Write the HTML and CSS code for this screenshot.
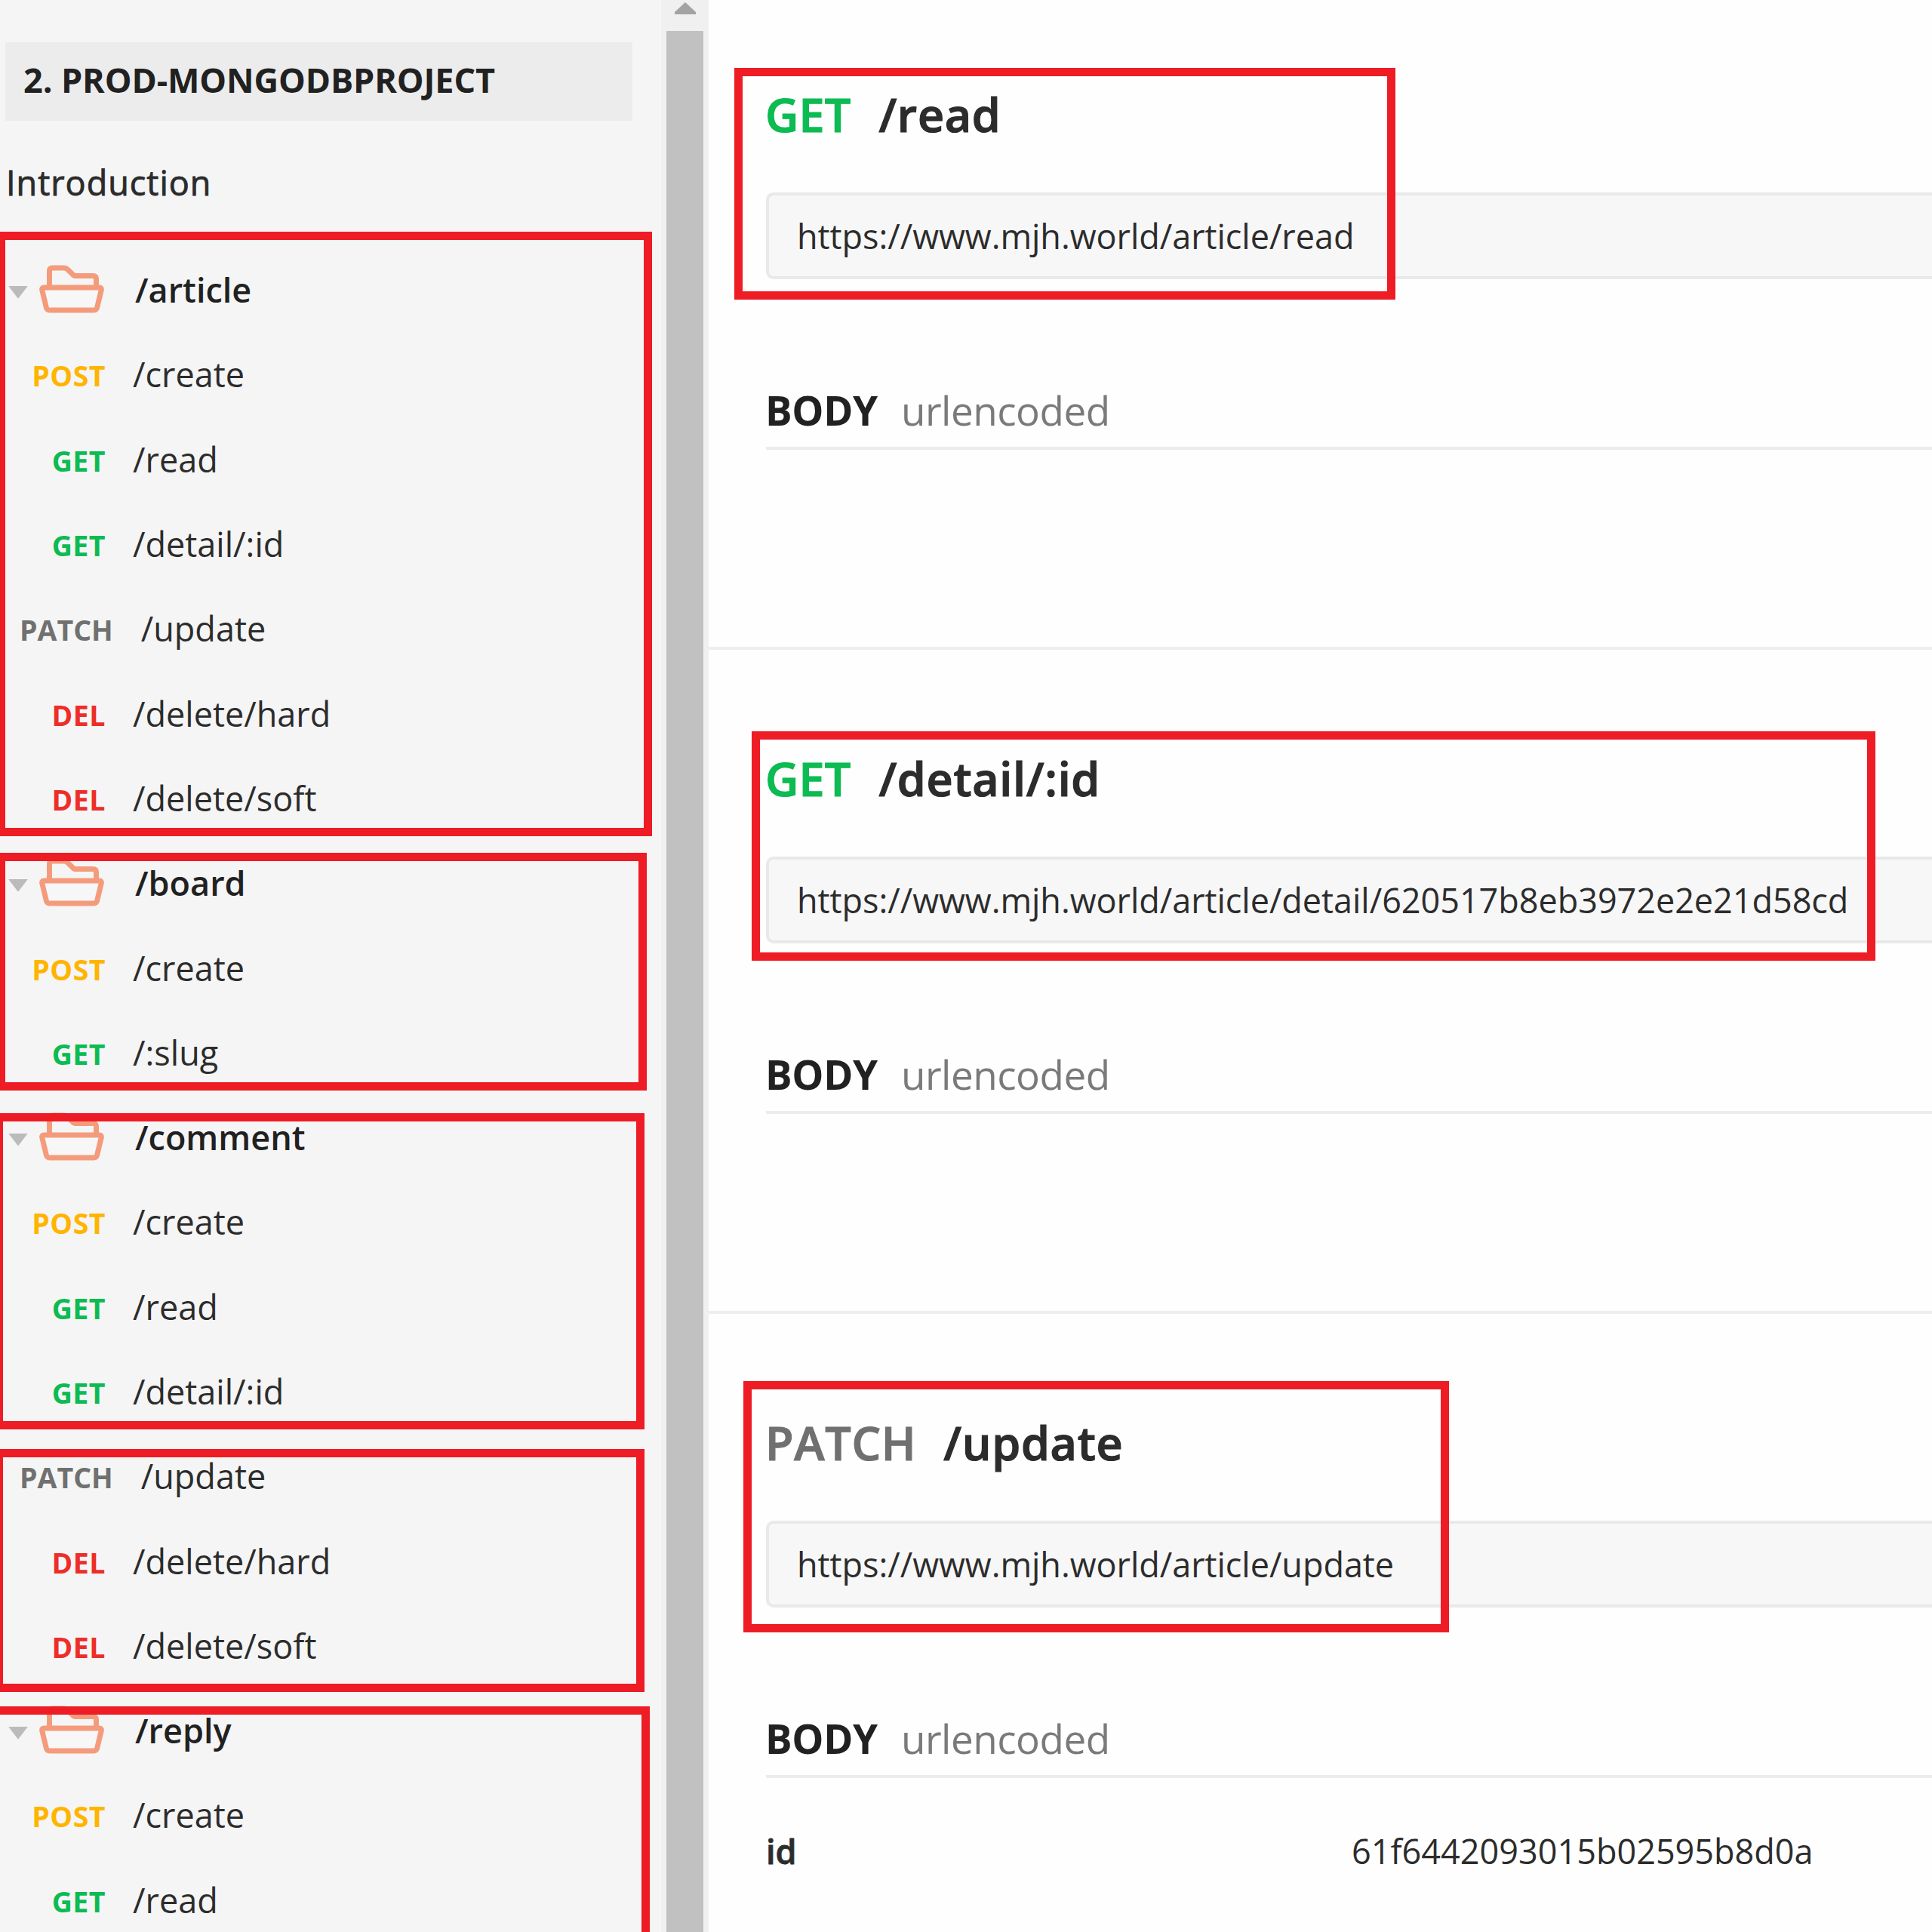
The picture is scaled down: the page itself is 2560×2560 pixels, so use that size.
FILE: index.html
```
<!DOCTYPE html>
<html lang="en">
<head>
<meta charset="utf-8">
<title>2. PROD-MONGODBPROJECT</title>
<link rel="stylesheet" href="styles.css">
</head>
<body>
<svg class="sprite" aria-hidden="true">
  <symbol id="folder" viewBox="0 0 86 64">
    <path class="front" d="M6.500 30H79.500Q83 30 82.200 33.500L76.500 57Q75.500 60 72.500 60H13.500Q10.500 60 9.500 57L3.800 33.500Q3 30 6.500 30Z"/>
    <path class="line" d="M13.500 29V8Q13.500 4 17.500 4H33Q35.500 4 37.300 5.700L44 12.300Q46 14.500 48.500 14.500H71Q75.500 14.500 75.500 18.500V29"/>
  </symbol>
</svg>
<div class="app">
  <nav class="sidebar">
    <h1 class="project">2. PROD-MONGODBPROJECT</h1>
    <a class="intro">Introduction</a>
    <ul class="tree">
      <li class="row"><span class="caret"></span><svg class="icon"><use href="#folder"/></svg><span class="folder">/article</span></li>
      <li class="row"><b class="tag post">POST</b><span>/create</span></li>
      <li class="row"><b class="tag get">GET</b><span>/read</span></li>
      <li class="row"><b class="tag get">GET</b><span>/detail/:id</span></li>
      <li class="row"><b class="tag patch">PATCH</b><span>/update</span></li>
      <li class="row"><b class="tag del">DEL</b><span>/delete/hard</span></li>
      <li class="row"><b class="tag del">DEL</b><span>/delete/soft</span></li>
      <li class="row"><span class="caret"></span><svg class="icon"><use href="#folder"/></svg><span class="folder">/board</span></li>
      <li class="row"><b class="tag post">POST</b><span>/create</span></li>
      <li class="row"><b class="tag get">GET</b><span>/:slug</span></li>
      <li class="row"><span class="caret"></span><svg class="icon"><use href="#folder"/></svg><span class="folder">/comment</span></li>
      <li class="row"><b class="tag post">POST</b><span>/create</span></li>
      <li class="row"><b class="tag get">GET</b><span>/read</span></li>
      <li class="row"><b class="tag get">GET</b><span>/detail/:id</span></li>
      <li class="row"><b class="tag patch">PATCH</b><span>/update</span></li>
      <li class="row"><b class="tag del">DEL</b><span>/delete/hard</span></li>
      <li class="row"><b class="tag del">DEL</b><span>/delete/soft</span></li>
      <li class="row"><span class="caret"></span><svg class="icon"><use href="#folder"/></svg><span class="folder">/reply</span></li>
      <li class="row"><b class="tag post">POST</b><span>/create</span></li>
      <li class="row"><b class="tag get">GET</b><span>/read</span></li>
    </ul>
  </nav>
  <div class="scrollbar">
    <svg class="arrow" viewBox="0 0 28 16"><path d="M14 0L28 13V16H0V13Z"/></svg>
    <div class="thumb"></div>
  </div>
  <main class="content">
    <section class="request">
      <h2 class="title"><span class="get">GET</span><span>/read</span></h2>
      <div class="url">https://www.mjh.world/article/read</div>
      <h3 class="body"><span>BODY</span><span class="kind">urlencoded</span></h3>
    </section>
    <section class="request">
      <h2 class="title"><span class="get">GET</span><span>/detail/:id</span></h2>
      <div class="url">https://www.mjh.world/article/detail/620517b8eb3972e2e21d58cd</div>
      <h3 class="body"><span>BODY</span><span class="kind">urlencoded</span></h3>
    </section>
    <section class="request">
      <h2 class="title"><span class="patch">PATCH</span><span>/update</span></h2>
      <div class="url">https://www.mjh.world/article/update</div>
      <h3 class="body"><span>BODY</span><span class="kind">urlencoded</span></h3>
      <dl class="param"><dt>id</dt><dd>61f6442093015b02595b8d0a</dd></dl>
    </section>
  </main>
  <div class="mark mark-article"></div>
  <div class="mark mark-board"></div>
  <div class="mark mark-comment"></div>
  <div class="mark mark-change"></div>
  <div class="mark mark-reply"></div>
  <div class="mark mark-read"></div>
  <div class="mark mark-detail"></div>
  <div class="mark mark-update"></div>
</div>
</body>
</html>
```
FILE: styles.css
```
* { box-sizing: border-box; }
body, h1, h2, h3, ul, dl, dd { margin: 0; padding: 0; }
body { font: 45px "Open Sans", sans-serif; color: #2c2c2c; background: #fefefe; overflow: hidden; }
.sprite { position: absolute; width: 0; height: 0; }
.app { position: relative; display: flex; width: 2560px; height: 2560px; overflow: hidden; }

/* Sidebar */
.sidebar { width: 876px; background: #f5f5f5; padding-top: 56px; overflow: hidden; }
.project { width: 831px; height: 104px; margin-left: 7px; padding-left: 24px; background: #ececec; font-size: 45px; font-weight: 700; line-height: 100px; letter-spacing: -.1px; color: #212121; }
.intro { display: block; height: 112px; margin: 26px 0 29px 8px; line-height: 112px; letter-spacing: 1px; -webkit-text-stroke: .8px #282828; }
.tree { list-style: none; }
.row { display: flex; align-items: center; height: 112.3px; padding-left: 22px; line-height: 60px; white-space: nowrap; }
.tag { min-width: 118px; margin-right: 36px; padding-top: 6px; text-align: right; font-size: 37.5px; font-weight: 700; letter-spacing: .5px; }
.tag + span { padding-top: 2px; }
.tag.patch { margin: 0 37px 0 4px; letter-spacing: 0; }
.caret { width: 26px; height: 17px; margin: 8px 15px 0 -11px; background: #bbb; clip-path: polygon(0 0, 100% 0, 50% 100%); }
.icon { width: 86px; height: 64px; margin-right: 41px; }
.front { fill: #f7f7f7; stroke: #f49b7c; stroke-width: 7; }
.line { fill: none; stroke: #f49b7c; stroke-width: 7; }
.folder { padding-top: 1px; font-weight: 600; color: #212121; }
.post { color: #ffb400; }
.get { color: #0cbb52; }
.patch { color: #707070; }
.del { color: #ed2e28; }

.scrollbar { width: 63px; background: #f0f0f0; display: flex; flex-direction: column; align-items: center; }
.arrow { width: 28px; height: 16px; margin: 3px 0 22px; fill: #a3a3a3; }
.thumb { width: 49px; flex: 1; background: #c1c1c1; margin-right: 1px; }

/* Requests */
.content { flex: 1; overflow: hidden; }
.request { height: 879.5px; padding: 131px 0 0 75px; border-bottom: 4px solid #eee; }
.request:first-child { height: 861px; padding-top: 112px; }
.title { display: flex; gap: 36px; height: 80px; line-height: 80px; font-size: 61px; font-weight: 600; letter-spacing: .7px; -webkit-text-stroke: 1.2px currentColor; }
.title .get { letter-spacing: .2px; margin-right: 1px; }
.url { height: 115px; margin: 63px -20px 134px 1px; padding-left: 37px; border: 4px solid #e9e9e9; border-radius: 10px; background: #f7f7f7; line-height: 107px; letter-spacing: -.04px; }
.body { display: flex; gap: 32px; height: 92px; line-height: 80px; margin-left: 1px; text-indent: -1px; border-bottom: 4px solid #ececec; font-size: 53px; font-weight: 700; letter-spacing: -.3px; color: #212121; }
.kind { font-weight: 400; color: #7a7a7a; letter-spacing: -.5px; }
.param { display: flex; margin-top: 57px; line-height: 80px; }
.param dt { width: 777px; padding-left: 1px; font-weight: 600; -webkit-text-stroke: .8px currentColor; }

/* Highlight frames drawn over the page */
.mark { position: absolute; border: 11px solid #ee1c24; }
.mark-article { left: -4px; top: 306.5px; width: 868px; height: 801px; }
.mark-board { left: -4px; top: 1130px; width: 861px; height: 314.5px; }
.mark-comment { left: -7.5px; top: 1474.5px; width: 861px; height: 419.5px; }
.mark-change { left: -7.5px; top: 1920px; width: 861px; height: 322px; }
.mark-reply { left: -11px; top: 2261px; width: 872px; height: 320px; }
.mark-read { left: 973px; top: 90px; width: 876px; height: 307px; }
.mark-detail { left: 996px; top: 969px; width: 1489px; height: 304px; }
.mark-update { left: 984.5px; top: 1830px; width: 935.5px; height: 333px; }
```
